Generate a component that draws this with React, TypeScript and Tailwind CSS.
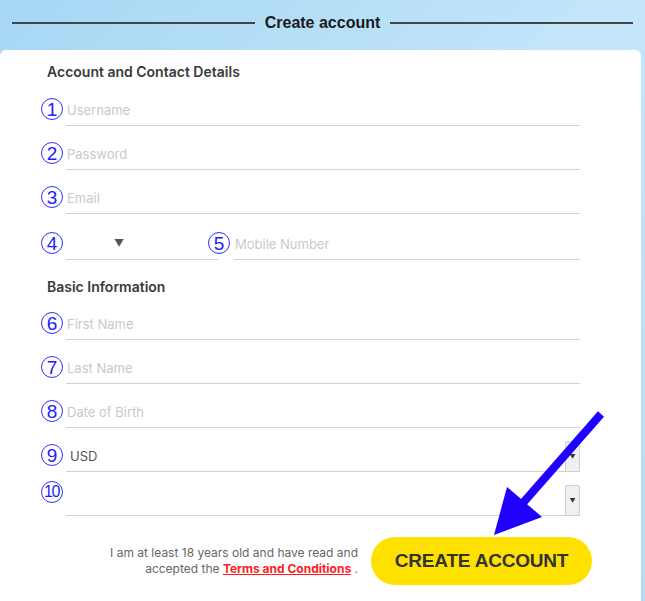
import React from "react";

function Num({ n, className = "" }: { n: number; className?: string }) {
  return (
    <span className={`w-[26px] shrink-0 pl-[1px] ${n === 10 ? "mb-[13px]" : "mb-[6px]"} ${className}`}>
      <span
        className={`flex items-center justify-center w-[22px] h-[22px] rounded-full border-[1.5px] border-[#3030ff] text-[#2020ff] leading-none [font-family:'Liberation_Sans',sans-serif] ${
          n === 10 ? "text-[16px] tracking-[-1.5px] pr-[1px]" : "text-[19px] pt-[1px]"
        }`}
      >
        {n}
      </span>
    </span>
  );
}

function Field({ n, placeholder }: { n: number; placeholder: string }) {
  return (
    <div className="flex items-end h-[44px]">
      <Num n={n} />
      <div className="flex-1 h-[32px] border-b-[1.5px] border-[#d2d2d2] flex items-center pl-[1px] pt-[2px] text-[13px] text-[#c9c9c9]">
        {placeholder}
      </div>
    </div>
  );
}

function SelectField({ n, value }: { n: number; value: string }) {
  return (
    <div className="flex items-end h-[44px]">
      <Num n={n} />
      <div className="relative flex-1 h-[32px] border-b-[1.5px] border-[#d2d2d2] flex items-center pl-[4px] pt-[2px] text-[13px] text-[#555]">
        {value}
        <div className="absolute right-0 bottom-[-1px] w-[15px] h-[31px] bg-[#f0f0f0] border border-[#d0d0d0] rounded-[2px] flex items-center justify-center text-[6px] text-[#333]">
          ▼
        </div>
      </div>
    </div>
  );
}

export default function App() {
  return (
    <div className="relative w-[645px] h-[601px] overflow-hidden bg-gradient-to-br from-[#a6d7f4] via-[#c4e6fa] to-[#b3dcf2] [font-family:Inter,'Liberation_Sans',sans-serif]">
      <div className="h-[50px] flex items-start pt-[13px] px-[12px]">
        <div className="flex-1 h-[1.5px] bg-[#444] mt-[9px]" />
        <span className="px-[10px] text-[16px] leading-[20px] font-bold text-[#1a1a1a] [font-family:'Liberation_Sans',sans-serif]">
          Create account
        </span>
        <div className="flex-1 h-[1.5px] bg-[#444] mt-[9px]" />
      </div>

      <div className="bg-white rounded-t-[6px] mr-[4px] h-[551px] pl-[40px] pr-[61px]">
        <div className="h-[32px] flex items-end pl-[7px] pb-[1px]">
          <h2 className="text-[14px] leading-[18px] font-semibold text-[#3a3a3a]">Account and Contact Details</h2>
        </div>
        <Field n={1} placeholder="Username" />
        <Field n={2} placeholder="Password" />
        <Field n={3} placeholder="Email" />
        <div className="flex items-end h-[46px]">
          <Num n={4} />
          <div className="w-[152px] h-[32px] border-b-[1.5px] border-[#d2d2d2] flex items-center pl-[48px] text-[10px] text-[#555]">
            ▼
          </div>
          <Num n={5} className="ml-[-11px] mr-[1px]" />
          <div className="flex-1 h-[32px] border-b-[1.5px] border-[#d2d2d2] flex items-center pl-[1px] pt-[2px] text-[13px] text-[#c9c9c9]">
            Mobile Number
          </div>
        </div>
        <div className="h-[36px] flex items-end pl-[7px]">
          <h2 className="text-[14px] leading-[18px] font-semibold text-[#3a3a3a]">Basic Information</h2>
        </div>
        <Field n={6} placeholder="First Name" />
        <Field n={7} placeholder="Last Name" />
        <Field n={8} placeholder="Date of Birth" />
        <SelectField n={9} value="USD" />
        <SelectField n={10} value="" />

        <div className="flex items-center justify-end mt-[21px] mr-[-12px]">
          <p className="text-right text-[12px] leading-[16px] text-[#666] mr-[13px]">
            I am at least 18 years old and have read and
            <br />
            accepted the{" "}
            <a className="font-bold text-[#ff1a1a] underline decoration-[#ff1a1a]">Terms and Conditions</a> .
          </p>
          <button className="w-[221px] h-[48px] rounded-full bg-[#ffe100] text-[19px] font-bold text-[#333] [font-family:'Liberation_Sans',sans-serif] tracking-[-0.2px]">
            CREATE ACCOUNT
          </button>
        </div>
      </div>

      <svg className="absolute left-0 top-0 pointer-events-none" width="645" height="601">
        <line x1="601" y1="414" x2="522" y2="504" stroke="#1f00ff" strokeWidth="8" />
        <polygon points="494,535 507,487 542,517" fill="#1f00ff" />
      </svg>
    </div>
  );
}
